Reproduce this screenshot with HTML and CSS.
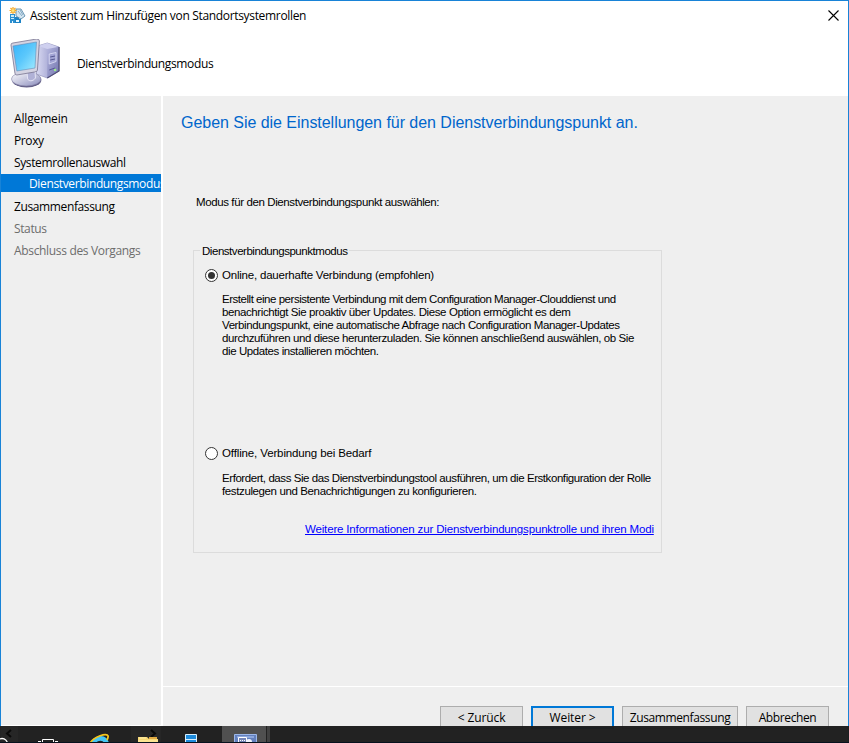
FILE: index.html
```html
<!DOCTYPE html>
<html lang="de">
<head>
<meta charset="utf-8">
<title>Assistent zum Hinzufügen von Standortsystemrollen</title>
<link rel="stylesheet" href="styles.css">
</head>
<body>
<div class="window">
  <header class="titlebar">
    <svg class="app-icon" width="17" height="17" viewBox="0 0 17 17">
      <path d="M1 7h5v9H1z" fill="#2b8fd0"/><path d="M2 8h3v2H2zM2 11h3v1H2z" fill="#c9ecfa"/>
      <path d="M6 10h4v2h2v4H6z" fill="#1c83c6"/><path d="M7 13h3v2H7zM3 14h1v2H3z" fill="#e8f7ff"/>
      <path d="M7 2l5 0 4 7-4 3-5-3z" fill="#d5e6f1" stroke="#5e8cab" stroke-width=".9"/>
      <path d="M9 4l4 5M11 3l3 5" stroke="#86abc5" fill="none"/>
      <path d="M4 0v7M.5 3.500h7M1.500 1l5 5M6.500 1l-5 5" stroke="#f5a623" stroke-width="1.200"/>
      <circle cx="4" cy="3.500" r="1.500" fill="#ffe57a"/>
    </svg>
    <span class="title">Assistent zum Hinzufügen von Standortsystemrollen</span>
    <svg class="close" width="11" height="11" viewBox="0 0 11 11"><path d="M.5.500l10 10M10.500.500l-10 10" stroke="#000" stroke-width="1.100"/></svg>
  </header>
  <div class="banner">
    <svg class="computer" width="50" height="50" viewBox="0 0 51 50" preserveAspectRatio="none">
      <defs>
        <linearGradient id="screen" x1="0" y1="0" x2="1" y2="1"><stop offset="0" stop-color="#35b3fa"/><stop offset=".5" stop-color="#5cc8fc"/><stop offset="1" stop-color="#a5edff"/></linearGradient>
        <linearGradient id="side" x1="0" y1="0" x2="1" y2="0"><stop offset="0" stop-color="#d9daf2"/><stop offset="1" stop-color="#8587c0"/></linearGradient>
        <linearGradient id="tower" x1="0" y1="0" x2="1" y2="1"><stop offset="0" stop-color="#b4b6df"/><stop offset="1" stop-color="#7173ad"/></linearGradient>
        <linearGradient id="foot" x1="0" y1="0" x2="1" y2="1"><stop offset="0" stop-color="#fff"/><stop offset="1" stop-color="#8b8dbd"/></linearGradient>
      </defs>
      <path d="M28 7l10-3 12 4v24l-12 7-11-4z" fill="url(#side)" stroke="#9294bd" stroke-width=".7"/>
      <path d="M38 10l12-2v24l-12 7z" fill="url(#tower)"/>
      <path d="M50 8v24l-12 7" fill="none" stroke="#4f4d75" stroke-width="1.300"/>
      <path d="M29 7l9-3 11 4-11 2z" fill="#cfd0ef"/>
      <path d="M40 15l7-1.500v9L40 25z" fill="#a1a3d4" stroke="#e0e2f8" stroke-width=".8"/>
      <path d="M41 18l5-1M41 21l5-1M40 31l6-2" stroke="#555790" stroke-width="1"/>
      <circle cx="46" cy="31" r="1.300" fill="#9bec8a"/>
      <ellipse cx="17" cy="41" rx="15" ry="7.500" fill="#625e87"/>
      <ellipse cx="16.500" cy="40" rx="15" ry="7" fill="url(#foot)" stroke="#8583a8" stroke-width=".6"/>
      <path d="M17 29l8-2 1 12c-3 4-7 3-8 1z" fill="#b0b1d6" stroke="#e5e5f5"/>
      <path d="M1 6Q1 4 3 4L27 0q3-.3 3 2l-2 29q0 2-3 2L7 36q-2 0-2-2z" fill="#d4d3e2" stroke="#77738f" stroke-width=".8"/>
      <path d="M3 7l24-4-1.500 26L7 32z" fill="url(#screen)" stroke="#648bb5" stroke-width=".6"/>
    </svg>
    <span class="page-name">Dienstverbindungsmodus</span>
  </div>
  <div class="body">
    <nav class="steps">
      <div class="step s1">Allgemein</div>
      <div class="step s2">Proxy</div>
      <div class="step s3">Systemrollenauswahl</div>
      <div class="step current">Dienstverbindungsmodus</div>
      <div class="step s5">Zusammenfassung</div>
      <div class="step pending s6">Status</div>
      <div class="step pending s7">Abschluss des Vorgangs</div>
    </nav>
    <main class="content">
      <section class="page">
        <h1>Geben Sie die Einstellungen für den Dienstverbindungspunkt an.</h1>
        <p class="prompt">Modus für den Dienstverbindungspunkt auswählen:</p>
        <fieldset class="group">
          <legend>Dienstverbindungspunktmodus</legend>
          <div class="option"><span class="radio checked"></span><span class="label online">Online, dauerhafte Verbindung (empfohlen)</span></div>
          <div class="description first">
            <div class="a1">Erstellt eine persistente Verbindung mit dem Configuration Manager-Clouddienst und</div>
            <div class="a2">benachrichtigt Sie proaktiv über Updates. Diese Option ermöglicht es dem</div>
            <div class="a3">Verbindungspunkt, eine automatische Abfrage nach Configuration Manager-Updates</div>
            <div class="a4">durchzuführen und diese herunterzuladen. Sie können anschließend auswählen, ob Sie</div>
            <div class="a5">die Updates installieren möchten.</div>
          </div>
          <div class="option"><span class="radio"></span><span class="label offline">Offline, Verbindung bei Bedarf</span></div>
          <div class="description second">
            <div class="b1">Erfordert, dass Sie das Dienstverbindungstool ausführen, um die Erstkonfiguration der Rolle</div>
            <div class="b2">festzulegen und Benachrichtigungen zu konfigurieren.</div>
          </div>
          <a class="more">Weitere Informationen zur Dienstverbindungspunktrolle und ihren Modi</a>
        </fieldset>
      </section>
      <footer class="actions">
        <button class="back">&lt; Zurück</button>
        <button class="next">Weiter &gt;</button>
        <button class="summary">Zusammenfassung</button>
        <button class="cancel">Abbrechen</button>
      </footer>
    </main>
  </div>
</div>
<div class="taskbar">
  <svg width="849" height="17" viewBox="0 0 849 17">
    <path d="M0 0h18v17H0zM131 0h30v17h-30z" fill="#292929" opacity=".5"/>
    <path d="M11 4L7 7.500l4 3.500M151 4l4 3.500-4 3.500" fill="none" stroke="#090909" stroke-width="2"/>
    <path d="M222 0h44v17h-44z" fill="#505050"/><path d="M267 0h3v17h-3z" fill="#414141"/>
    <circle cx="2" cy="18" r="5.500" fill="none" stroke="#fff" stroke-width="1.300"/>
    <path d="M42.500 17v-3.500h11V17M38 15.500h3M38.500 15v2M55 15.500h3M57.500 15v2" fill="none" stroke="#fff"/>
    <path d="M91 17c2-5 6-7 10-7 4 0 7 3 8 7h-5c-1-3-6-3-8 0z" fill="#45c6f4"/>
    <path d="M90 17c4-6 17-11 18-7 .5 1-.5 3-1 4" fill="none" stroke="#f5c51c" stroke-width="1.800"/>
    <path d="M138 17v-6h9l2 2h9v4z" fill="#f7d775"/><path d="M139 12h7M138 15h20" stroke="#fff0ae"/><path d="M149 11h8v2h-8z" fill="#dfa942"/>
    <path d="M185.500 8.500h11V17h-11zM185.500 13.500h11" fill="#1d8bdc" stroke="#d7f0ff"/>
    <path d="M234.500 8.500h22V17h-22z" fill="#6380bd" stroke="#9db8ea"/>
    <path d="M237 10h17v2h-17z" fill="#8da7dc"/><path d="M238.500 11.500h8v5h-8z" fill="#7485b7" stroke="#fff"/>
    <path d="M240 14h1v1h-1zM242 14h1v1h-1zM244 14h1v1h-1z" fill="#fff"/><circle cx="249" cy="16" r="3" fill="#f2f5ff"/>
    <path d="M0 16.500h849" stroke="#07111d"/>
  </svg>
</div>
</body>
</html>
```
FILE: styles.css
```css
* { box-sizing: border-box; }
html, body { margin: 0; height: 743px; overflow: hidden; }
body { position: relative; background: #efefef; color: #000; font: 12px/22px "Open Sans", "Noto Sans", sans-serif; }
.window { display: flex; flex-direction: column; height: 743px; border: 1px solid #1883d7; border-bottom: 0; background: #fff; white-space: nowrap; }
.titlebar { display: flex; align-items: center; height: 29px; padding: 0 9px 0 8px; }
.app-icon { flex: none; margin-right: 4px; }
.title { letter-spacing: -.33px; }
.close { margin-left: auto; }
.banner { display: flex; align-items: center; height: 66px; padding-left: 9px; }
.computer { margin: 2px 17px 0 0; }
.page-name { margin-top: 2px; letter-spacing: -.36px; }
.body { display: grid; grid-template-columns: 160px minmax(0, 1fr); column-gap: 2px; height: 647px; }
.steps { height: 629px; padding-top: 12px; background: #efefef; }
.step { height: 22px; padding-left: 13px; overflow: hidden; letter-spacing: -.38px; }
.s1 { letter-spacing: -.15px; }
.current { height: 18px; margin: 0 0 4px; padding-left: 28px; line-height: 20px; background: #0078d7; color: #fff; letter-spacing: -.36px; }
.s7 { letter-spacing: -.33px; }
.pending { color: #6d6d6d; }
.content { display: flex; flex-direction: column; background: #efefef; font-family: "Liberation Sans", sans-serif; }
.page { height: 591px; padding: 17px 0 0 18px; border-bottom: 1px solid #fff; }
h1 { margin: 0; font-size: 16px; line-height: 20px; font-weight: 400; color: #06c; letter-spacing: -.035px; }
.prompt { margin: 62px 0 0 15px; font-size: 11.5px; line-height: 14px; letter-spacing: -.39px; }
.group { min-width: 0; width: 469px; height: 309px; margin: 35px 0 0 12px; padding: 9px 0 0 11px; border: 1px solid #dcdcdc; font-size: 11.5px; line-height: 13px; }
legend { height: 13px; margin-left: -5px; padding: 0 2px; line-height: 14px; letter-spacing: -.46px; }
.option { display: flex; align-items: center; height: 19px; }
.radio { display: flex; align-items: center; justify-content: center; flex: none; width: 13px; height: 13px; margin-right: 4px; border: 1px solid #333; border-radius: 50%; background: #fff; }
.checked::after { content: ""; width: 7px; height: 7px; border-radius: 50%; background: #333; }
.online { letter-spacing: -.21px; }
.offline { letter-spacing: -.13px; }
.description { padding-left: 17px; letter-spacing: -.41px; }
.a1 { letter-spacing: -.47px; }
.a2 { letter-spacing: -.4px; }
.b1 { letter-spacing: -.43px; }
.b2 { letter-spacing: -.38px; }
.first { height: 159px; padding-top: 8px; }
.second { height: 51px; padding-top: 9px; }
.more { display: block; width: 349px; margin: 9px 0 0 100px; color: #00f; text-decoration: underline; letter-spacing: -.16px; }
.actions { display: flex; gap: 8px; height: 56px; padding: 19px 19px 0 0; justify-content: flex-end; }
button { height: 23px; padding: 0; border: 1px solid #adadad; background: #e1e1e1; color: #000; font: 12px/19px "Open Sans", "Noto Sans", sans-serif; letter-spacing: -.38px; }
.back, .next, .cancel { width: 83px; }
.back, .next { letter-spacing: -.1px; }
.summary { width: 116px; }
.next { border: 2px solid #0078d7; }
.taskbar { position: absolute; left: 0; top: 726px; width: 849px; height: 17px; background: rgba(29, 29, 29, .975); }
.taskbar svg { display: block; }
```
